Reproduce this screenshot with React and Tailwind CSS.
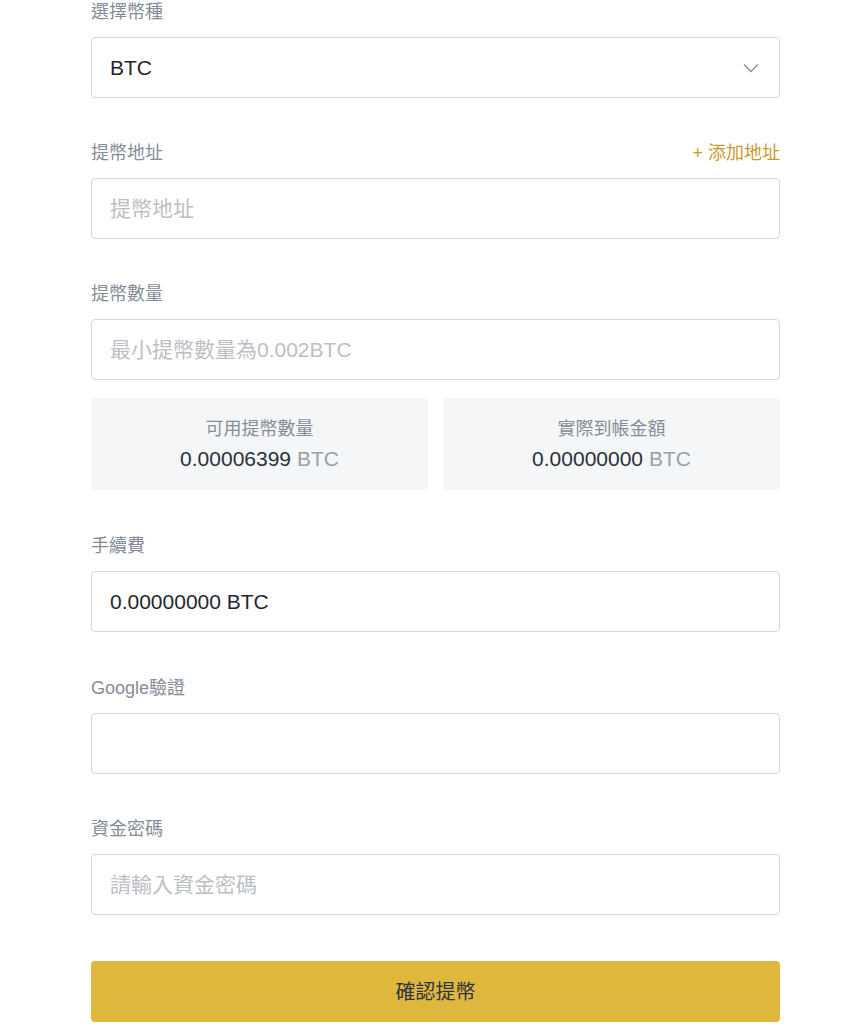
import React from 'react'

const font = { fontFamily: '"Liberation Sans", "Noto Sans CJK TC", sans-serif' }

const Label = ({ children, first, right, top = 'mt-[43px]' }) => (
  <div className={`flex items-center justify-between h-[24px] mb-[13px] ${first ? '' : top}`}>
    <span className='text-[18px] text-[#868d99] leading-[24px]'>{children}</span>
    {right}
  </div>
)

const Field = ({ value, placeholder, children }) => (
  <div className='flex items-center justify-between h-[61px] border border-[#d3d7dc] rounded-[4px] px-[18px] bg-white'>
    {value ? (
      <span className='text-[21px] text-[#1f2630]'>{value}</span>
    ) : (
      <span className='text-[21px] text-[#bcc0c6]'>{placeholder}</span>
    )}
    {children}
  </div>
)

const InfoBox = ({ title, amount }) => (
  <div className='flex-1 h-[92px] bg-[#f5f6f8] rounded-[4px] flex flex-col items-center justify-center gap-[3px]'>
    <span className='text-[18px] text-[#868d99] leading-[26px]'>{title}</span>
    <span className='text-[21px] leading-[28px] text-[#2a313b]'>
      {amount} <span className='text-[#9aa0a8]'>BTC</span>
    </span>
  </div>
)

export default function App() {
  return (
    <div style={font} className='min-h-screen bg-white pl-[91px] pr-[80px]'>
      <Label first>選擇幣種</Label>
      <Field value='BTC'>
        <svg width='16' height='10' viewBox='0 0 16 10' fill='none' className='mr-[2px]'>
          <path d='M1 1.5l7 7 7-7' stroke='#8a9099' strokeWidth='1.4' />
        </svg>
      </Field>

      <Label right={<span className='text-[18px] text-[#c99a2e]'>+ 添加地址</span>}>提幣地址</Label>
      <Field placeholder='提幣地址' />

      <Label>提幣數量</Label>
      <Field placeholder='最小提幣數量為0.002BTC' />

      <div className='flex gap-[15px] mt-[18px]'>
        <InfoBox title='可用提幣數量' amount='0.00006399' />
        <InfoBox title='實際到帳金額' amount='0.00000000' />
      </div>

      <Label top='mt-[44px]'>手續費</Label>
      <Field value='0.00000000 BTC' />

      <Label top='mt-[44px]'>Google驗證</Label>
      <Field />

      <Label>資金密碼</Label>
      <Field placeholder='請輸入資金密碼' />

      <button className='w-full h-[61px] mt-[46px] rounded-[4px] bg-[#e0b73d] text-[20px] text-[#2f3540]'>
        確認提幣
      </button>
    </div>
  )
}
